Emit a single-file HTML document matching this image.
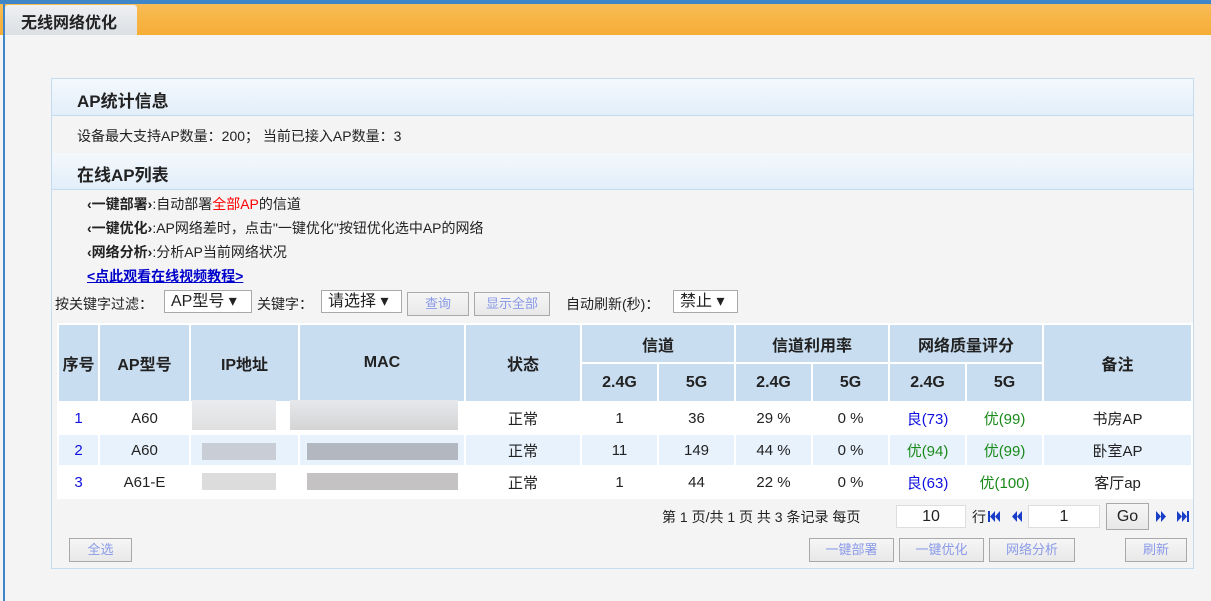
<!DOCTYPE html>
<html><head><meta charset="utf-8"><style>
*{margin:0;padding:0;box-sizing:border-box}
body{width:1211px;height:601px;background:#f4f4f4;font-family:"Liberation Sans","Noto Sans CJK SC",sans-serif;font-size:14px;color:#222;position:relative;overflow:hidden}
.abs{position:absolute}
.topbar{left:0;top:0;width:1211px;height:4px;background:#3f86c8}
.orange{left:0;top:4px;width:1211px;height:31px;background:linear-gradient(#f8bc55,#f6ad36)}
.lline{left:3px;top:4px;width:2px;height:597px;background:#3f86c8}
.tab{left:5px;top:5px;width:132px;height:30px;background:linear-gradient(#eef0f2,#dcdfe3);border-radius:3px 3px 0 0;font-weight:bold;font-size:16px;padding:4px 0 0 16px;color:#222}
.panel{left:51px;top:78px;width:1143px;height:491px;border:1px solid #c4dcf0;background:#f4f4f4}
.hdr{left:52px;width:1141px;height:37px;background:linear-gradient(#f4f8fd,#e2eef9);border-bottom:1px solid #c4dcf0;font-weight:bold;font-size:17px;padding:8px 0 0 25px}
.t{white-space:nowrap}
.btn{border:1px solid #a9a9a9;background:linear-gradient(#f6f6f6,#e8e8e8);color:#8a9ae8;font-size:13px;text-align:center;height:24px;line-height:22px}
.sel{border:1px solid #a9a9a9;background:#fff;height:23px;font-size:16px;padding-left:6px;line-height:21px}
table{position:absolute;left:57px;top:323px;border-collapse:collapse;width:1134px;table-layout:fixed}
td,th{text-align:center;border:2px solid #fff;font-size:15px}
th{background:#c9ddf0;font-weight:bold;font-size:16px}
tr.h1 th{height:39px}tr.h2 th{height:39px}
td{background:#fff;height:32px}
tr.alt td{background:#e8f2fd}
.blue{color:#1010e0}.green{color:#1a8a1a}
.blur{position:absolute;height:17px}
.inp{background:#fff;border:1px solid #ddd;text-align:center;font-size:16px;height:23px;line-height:21px}
</style></head><body>
<div class="abs topbar"></div><div class="abs orange"></div><div class="abs lline"></div>
<div class="abs tab">无线网络优化</div>
<div class="abs panel"></div>
<div class="abs hdr" style="top:79px">AP统计信息</div>
<div class="abs t" style="left:77px;top:126px">设备最大支持AP数量：200；&nbsp;当前已接入AP数量：3</div>
<div class="abs hdr" style="top:153px">在线AP列表</div>
<div class="abs t" style="left:87px;top:194px"><b>‹一键部署›</b>:自动部署<span style="color:#f00">全部AP</span>的信道</div>
<div class="abs t" style="left:87px;top:218px"><b>‹一键优化›</b>:AP网络差时，点击"一键优化"按钮优化选中AP的网络</div>
<div class="abs t" style="left:87px;top:242px"><b>‹网络分析›</b>:分析AP当前网络状况</div>
<div class="abs t" style="left:87px;top:266px;color:#00c;font-weight:bold;text-decoration:underline">&lt;点此观看在线视频教程&gt;</div>
<div class="abs t" style="left:55px;top:294px">按关键字过滤：</div>
<div class="abs sel" style="left:164px;top:290px;width:88px">AP型号 ▾</div>
<div class="abs t" style="left:257px;top:294px">关键字：</div>
<div class="abs sel" style="left:321px;top:290px;width:81px">请选择 ▾</div>
<div class="abs btn" style="left:407px;top:292px;width:62px">查询</div>
<div class="abs btn" style="left:474px;top:292px;width:76px">显示全部</div>
<div class="abs t" style="left:566px;top:294px">自动刷新(秒)：</div>
<div class="abs sel" style="left:673px;top:290px;width:65px">禁止 ▾</div>
<table>
<colgroup><col style="width:41px"><col style="width:91px"><col style="width:109px"><col style="width:166px"><col style="width:116px"><col style="width:77px"><col style="width:77px"><col style="width:77px"><col style="width:77px"><col style="width:77px"><col style="width:77px"><col style="width:149px"></colgroup>
<tr class="h1"><th rowspan="2">序号</th><th rowspan="2">AP型号</th><th rowspan="2">IP地址</th><th rowspan="2">MAC</th><th rowspan="2">状态</th><th colspan="2">信道</th><th colspan="2">信道利用率</th><th colspan="2">网络质量评分</th><th rowspan="2">备注</th></tr>
<tr class="h2"><th>2.4G</th><th>5G</th><th>2.4G</th><th>5G</th><th>2.4G</th><th>5G</th></tr>
<tr><td class="blue">1</td><td>A60</td><td></td><td></td><td>正常</td><td>1</td><td>36</td><td>29 %</td><td>0 %</td><td class="blue">良(73)</td><td class="green">优(99)</td><td>书房AP</td></tr>
<tr class="alt"><td class="blue">2</td><td>A60</td><td></td><td></td><td>正常</td><td>11</td><td>149</td><td>44 %</td><td>0 %</td><td class="green">优(94)</td><td class="green">优(99)</td><td>卧室AP</td></tr>
<tr><td class="blue">3</td><td>A61-E</td><td></td><td></td><td>正常</td><td>1</td><td>44</td><td>22 %</td><td>0 %</td><td class="blue">良(63)</td><td class="green">优(100)</td><td>客厅ap</td></tr>
</table>
<div class="blur" style="left:192px;top:400px;width:84px;height:30px;background:linear-gradient(#e9ebee,#e0e0e0)"></div>
<div class="blur" style="left:290px;top:400px;width:168px;height:30px;background:linear-gradient(#e6e8ec,#d4d4d4)"></div>
<div class="blur" style="left:202px;top:443px;width:74px;background:#c9ced6"></div>
<div class="blur" style="left:307px;top:443px;width:151px;background:#b3b8c0"></div>
<div class="blur" style="left:202px;top:473px;width:74px;background:#dcdcdc"></div>
<div class="blur" style="left:307px;top:473px;width:151px;background:#c4c2c2"></div>
<div class="abs t" style="left:662px;top:507px">第 1 页/共 1 页 共 3 条记录 每页</div>
<div class="abs inp" style="left:896px;top:505px;width:70px">10</div>
<div class="abs t" style="left:972px;top:507px">行</div>
<svg class="abs" style="left:988px;top:511px" width="36" height="11" viewBox="0 0 36 11" fill="#1a3ec8"><rect x="0" y="0" width="2" height="11"/><path d="M7 0 L2 5.5 L7 11Z M12 0 L7 5.5 L12 11Z M29 0 L24 5.5 L29 11Z M34 0 L29 5.5 L34 11Z"/></svg>
<div class="abs inp" style="left:1028px;top:505px;width:72px">1</div>
<div class="abs btn" style="left:1106px;top:503px;width:43px;height:27px;color:#222;font-size:16px;line-height:25px">Go</div>
<svg class="abs" style="left:1156px;top:511px" width="34" height="11" viewBox="0 0 34 11" fill="#1a3ec8"><path d="M0 0 L5 5.5 L0 11Z M5 0 L10 5.5 L5 11Z M21 0 L26 5.5 L21 11Z M26 0 L31 5.5 L26 11Z"/><rect x="31" y="0" width="2" height="11"/></svg>
<div class="abs btn" style="left:69px;top:538px;width:63px">全选</div>
<div class="abs btn" style="left:809px;top:538px;width:85px">一键部署</div>
<div class="abs btn" style="left:899px;top:538px;width:85px">一键优化</div>
<div class="abs btn" style="left:989px;top:538px;width:86px">网络分析</div>
<div class="abs btn" style="left:1125px;top:538px;width:62px">刷新</div>
</body></html>
